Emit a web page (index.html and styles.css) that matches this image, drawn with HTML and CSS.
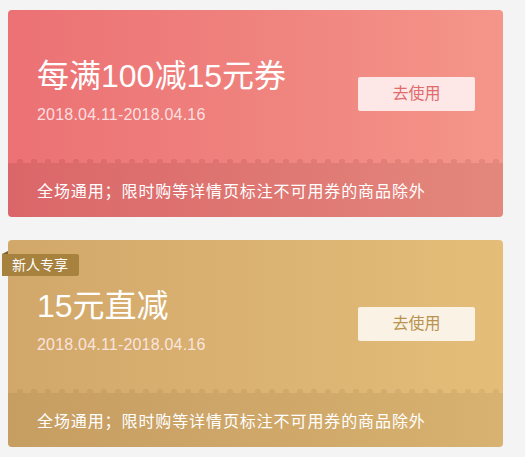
FILE: index.html
```html
<!DOCTYPE html>
<html lang="zh-CN">
<head>
  <meta charset="UTF-8" />
  <meta name="viewport" content="width=device-width, initial-scale=1.0">
  <title>优惠券</title>
  <link rel="stylesheet" href="styles.css">
</head>
<body>
  <div class="lista">
    <div class="cupon rojo">
      <div class="arriba">
        <div class="info">
          <div class="titulo">每满100减15元券</div>
          <div class="fecha">2018.04.11-2018.04.16</div>
        </div>
        <div class="boton">去使用</div>
      </div>
      <div class="abajo">全场通用；限时购等详情页标注不可用券的商品除外</div>
    </div>

    <div class="cupon dorado">
      <div class="etiqueta">新人专享</div>
      <div class="arriba">
        <div class="info">
          <div class="titulo">15元直减</div>
          <div class="fecha">2018.04.11-2018.04.16</div>
        </div>
        <div class="boton">去使用</div>
      </div>
      <div class="abajo">全场通用；限时购等详情页标注不可用券的商品除外</div>
    </div>
  </div>
</body>
</html>
```

FILE: styles.css
```css
html, body {
  margin: 0;
  padding: 0;
  background: #f4f4f4;
  font-family: "Liberation Sans", "Noto Sans CJK SC", sans-serif;
}

.lista {
  display: flex;
  flex-direction: column;
  gap: 23px;
  padding: 10px 22px 0 8px;
}

.cupon {
  position: relative;
  height: 207px;
  border-radius: 4px;
  display: flex;
  flex-direction: column;
  color: #fff;
}

.rojo {
  background: linear-gradient(90deg, #ec7174 0%, #f08680 60%, #f5968a 100%);
  --banda: rgba(60, 0, 0, 0.09);
}
.dorado {
  background: linear-gradient(90deg, #d2a86a 0%, #dcb473 60%, #e4be79 100%);
  --banda: rgba(60, 30, 0, 0.07);
}

.arriba {
  height: 153px;
  box-sizing: border-box;
  padding: 48px 28px 0 29px;
  display: flex;
  justify-content: space-between;
  align-items: flex-start;
}

.titulo {
  font-size: 32px;
  line-height: 36px;
}

.fecha {
  margin-top: 11px;
  font-size: 16px;
  line-height: 20px;
  letter-spacing: 0.2px;
  color: rgba(255, 236, 236, 0.9);
}

.boton {
  margin-top: 19px;
  width: 117px;
  height: 34px;
  line-height: 34px;
  text-align: center;
  font-size: 16px;
  border-radius: 2px;
}

.rojo .boton { background: #fde7e7; color: #e06a6c; }
.dorado .boton { background: #faf2e5; color: #b99250; }

.abajo {
  position: relative;
  flex: 1;
  display: flex;
  align-items: center;
  padding-left: 29px;
  font-size: 16px;
  letter-spacing: 0.9px;
  background: var(--banda);
  border-radius: 0 0 4px 4px;
}

/* dientes del borde */
.abajo::before {
  content: "";
  position: absolute;
  left: 9px;
  right: 4px;
  top: -4px;
  height: 4px;
  background: radial-gradient(circle at 3px 3px, var(--banda) 3px, transparent 3.5px) 0 0 / 14px 6px repeat-x;
}

.etiqueta {
  position: absolute;
  left: -6px;
  top: 14px;
  height: 22px;
  line-height: 22px;
  padding: 0 10px 0 10px;
  width: 57px;
  font-size: 14px;
  background: #a7823f;
  border-radius: 0 2px 2px 0;
}

.etiqueta::before {
  content: "";
  position: absolute;
  left: 0;
  top: -3px;
  border-left: 6px solid transparent;
  border-bottom: 3px solid #7d6030;
}
```
